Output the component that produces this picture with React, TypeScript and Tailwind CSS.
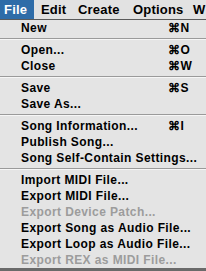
import React from "react";

type Item = { label: string; key?: string; disabled?: boolean } | "sep";

const items: Item[] = [
  { label: "New", key: "⌘N" },
  "sep",
  { label: "Open...", key: "⌘O" },
  { label: "Close", key: "⌘W" },
  "sep",
  { label: "Save", key: "⌘S" },
  { label: "Save As..." },
  "sep",
  { label: "Song Information...", key: "⌘I" },
  { label: "Publish Song..." },
  { label: "Song Self-Contain Settings..." },
  "sep",
  { label: "Import MIDI File..." },
  { label: "Export MIDI File..." },
  { label: "Export Device Patch...", disabled: true },
  { label: "Export Song as Audio File..." },
  { label: "Export Loop as Audio File..." },
  { label: "Export REX as MIDI File...", disabled: true },
];

export default function App() {
  return (
    <div
      className="w-[206px] h-[271px] overflow-hidden bg-[#e4e4e4] flex flex-col"
      style={{ fontFamily: '"Liberation Sans", Arial, sans-serif' }}
    >
      <div className="h-[20px] shrink-0 flex items-stretch bg-[#e2e2e2] border-b border-[#5a5a5a] text-[13px] font-bold text-black whitespace-nowrap tracking-[0.2px] overflow-hidden">
        <div className="w-[34px] shrink-0 bg-[#2e6ca8] text-white pl-[4px] flex items-center">File</div>
        <div className="w-[44px] shrink-0 pl-[7px] flex items-center">Edit</div>
        <div className="w-[55px] shrink-0 flex items-center">Create</div>
        <div className="w-[60px] shrink-0 flex items-center">Options</div>
        <div className="shrink-0 flex items-center">W</div>
      </div>
      <div className="flex flex-col text-[12px] font-bold tracking-[0.4px]">
        {items.map((it, i) =>
          it === "sep" ? (
            <div key={i} className="h-[6px] flex flex-col justify-center">
              <div className="h-px bg-[#9a9a9a]" />
              <div className="h-px bg-[#f6f6f6]" />
            </div>
          ) : (
            <div
              key={i}
              className={`h-[16px] flex items-center justify-between pl-[21px] pr-[20px] whitespace-nowrap ${
                it.disabled ? "text-[#9c9c9c]" : "text-black"
              }`}
            >
              <span>{it.label}</span>
              {it.key && <span className="w-[18px]">{it.key}</span>}
            </div>
          )
        )}
      </div>
      <div className="flex-1" />
      <div className="h-[3px] bg-[#6a6a6a] shrink-0" />
    </div>
  );
}
